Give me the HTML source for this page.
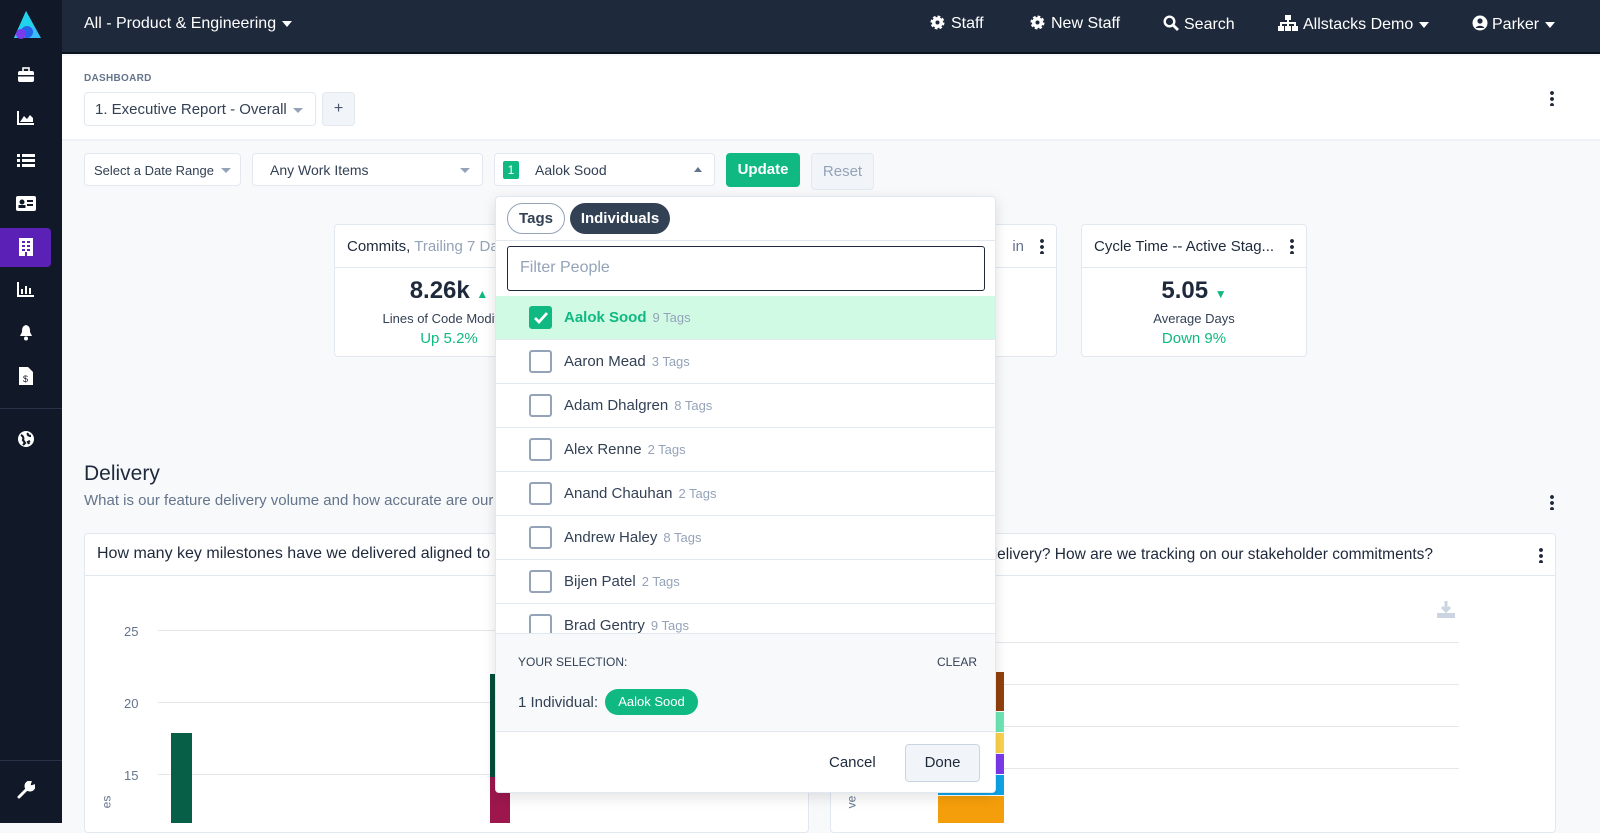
<!DOCTYPE html>
<html><head><meta charset="utf-8"><style>
*{box-sizing:border-box;margin:0;padding:0}
body{width:1600px;height:823px;overflow:hidden;font-family:"Liberation Sans",sans-serif;background:#f8f9fb;position:relative;color:#1e293b}
.abs{position:absolute}
.top{left:0;top:0;width:1600px;height:54px;background:#1e293b;border-bottom:2px solid #0b1220}
.side{left:0;top:0;width:62px;height:823px;background:#111827}
.topt{color:#fff;font-size:16px;top:15px}
.caret{display:inline-block;width:0;height:0;border-left:5px solid transparent;border-right:5px solid transparent;border-top:6px solid #fff;vertical-align:middle;margin-left:6px}
.sel{background:#fff;border:1px solid #e2e8f0;border-radius:4px;font-size:14px;color:#334155}
.gc{display:inline-block;width:0;height:0;border-left:5px solid transparent;border-right:5px solid transparent;border-top:5px solid #94a3b8}
.card{background:#fff;border:1px solid #e2e8f0;border-radius:4px}
.kebab{width:4px;height:16px;background:radial-gradient(circle,#1e293b 1.8px,transparent 2px) 0 0/4px 6px repeat-y}
.row{position:absolute;left:0;width:500px;height:44px;border-bottom:1px solid #e2e8f0;font-size:15px;color:#334155}
.cb{position:absolute;left:33px;top:10px;width:23px;height:23px;border:2px solid #94a3b8;border-radius:3px;background:#fff}
.row span.n{position:absolute;left:68px;top:13px}
.row span.t{color:#94a3b8;font-size:13px;margin-left:6px}
.ic{fill:#fff}
</style></head><body>
<div class="abs top"></div>
<div class="abs side"></div>
<svg class="abs" style="left:10px;top:10px" width="32" height="30"><polygon points="16,1 31,28 4,28" fill="#38bdf8"/><polygon points="16,1 24,16 10,26 4,28" fill="#22d3ee"/><circle cx="17" cy="22" r="6" fill="#2563eb"/><circle cx="11" cy="24" r="5" fill="#7c3aed"/></svg>
<div class="abs" style="left:0;top:228px;width:51px;height:39px;background:#5b21b6;border-radius:0 4px 4px 0"></div>
<svg class="abs" style="left:17px;top:67px" width="18" height="16"><rect x="1" y="4" width="16" height="11" rx="2" class="ic"/><rect x="6" y="1" width="6" height="4" fill="none" stroke="#fff" stroke-width="1.6"/><rect x="1" y="8" width="16" height="1.5" fill="#111827"/></svg>
<svg class="abs" style="left:17px;top:110px" width="18" height="15"><path d="M1 1V14H17" stroke="#fff" stroke-width="2" fill="none"/><path d="M3 12L7 6L10 9L13 5L16 8V12Z" class="ic"/></svg>
<svg class="abs" style="left:17px;top:153px" width="18" height="15"><g class="ic"><rect x="0" y="1" width="3" height="3"/><rect x="5" y="1" width="13" height="3"/><rect x="0" y="6" width="3" height="3"/><rect x="5" y="6" width="13" height="3"/><rect x="0" y="11" width="3" height="3"/><rect x="5" y="11" width="13" height="3"/></g></svg>
<svg class="abs" style="left:16px;top:196px" width="20" height="15"><rect x="0" y="0" width="20" height="15" rx="2" class="ic"/><circle cx="6" cy="6" r="2.5" fill="#111827"/><rect x="2.5" y="9" width="7" height="3" fill="#111827"/><rect x="11" y="4" width="6" height="2" fill="#111827"/><rect x="11" y="8" width="6" height="2" fill="#111827"/></svg>
<svg class="abs" style="left:19px;top:238px" width="14" height="18"><rect width="14" height="18" class="ic"/><g fill="#5b21b6"><rect x="3" y="3" width="3" height="2"/><rect x="8" y="3" width="3" height="2"/><rect x="3" y="7" width="3" height="2"/><rect x="8" y="7" width="3" height="2"/><rect x="3" y="11" width="3" height="2"/><rect x="8" y="11" width="3" height="2"/><rect x="6" y="14" width="2" height="4"/></g></svg>
<svg class="abs" style="left:17px;top:282px" width="18" height="15"><path d="M1 0V14H17" stroke="#fff" stroke-width="2" fill="none"/><g class="ic"><rect x="4" y="7" width="2" height="5"/><rect x="8" y="4" width="2" height="8"/><rect x="12" y="6" width="2" height="6"/></g></svg>
<svg class="abs" style="left:18px;top:324px" width="16" height="17"><path d="M8 1C4 2 4 5 4 8L2 12H14L12 8C12 5 12 2 8 1Z" class="ic"/><circle cx="8" cy="14.5" r="2" class="ic"/></svg>
<svg class="abs" style="left:19px;top:367px" width="14" height="18"><path d="M0 0H9L14 5V18H0Z" class="ic"/><text x="4" y="15" font-size="9" fill="#111827" font-family="Liberation Sans">$</text></svg>
<div class="abs" style="left:0;top:408px;width:62px;height:1px;background:#283347"></div>
<svg class="abs" style="left:17px;top:430px" width="18" height="18"><circle cx="9" cy="9" r="8" class="ic"/><path d="M4 5C6 6 7 8 6 10L8 13L6 15M11 3C10 5 12 6 14 6M13 11L11 12L12 14" stroke="#111827" stroke-width="2.2" fill="none"/></svg>
<div class="abs" style="left:0;top:760px;width:62px;height:1px;background:#283347"></div>
<svg class="abs" style="left:17px;top:781px" width="18" height="18"><path d="M2 16L10 8M13 1A4 4 0 1 0 17 5L14 6L12 4Z" stroke="#fff" stroke-width="3" fill="#fff" stroke-linecap="round"/></svg>
<div class="abs topt" style="left:84px">All - Product &amp; Engineering<span class="caret"></span></div>
<div class="abs topt" style="left:930px"><svg width="15" height="15" style="vertical-align:-2px;margin-right:6px"><circle cx="7.5" cy="7.5" r="5.5" fill="#fff" stroke="#fff" stroke-width="3" stroke-dasharray="2.5 1.8"/><circle cx="7.5" cy="7.5" r="2" fill="#1e293b"/></svg>Staff</div>
<div class="abs topt" style="left:1030px"><svg width="15" height="15" style="vertical-align:-2px;margin-right:6px"><circle cx="7.5" cy="7.5" r="5.5" fill="#fff" stroke="#fff" stroke-width="3" stroke-dasharray="2.5 1.8"/><circle cx="7.5" cy="7.5" r="2" fill="#1e293b"/></svg>New Staff</div>
<div class="abs topt" style="left:1163px"><svg width="16" height="16" style="vertical-align:-2px;margin-right:5px"><circle cx="6.5" cy="6.5" r="4.8" fill="none" stroke="#fff" stroke-width="2.4"/><path d="M10 10L15 15" stroke="#fff" stroke-width="2.8"/></svg>Search</div>
<div class="abs topt" style="left:1278px"><svg width="20" height="16" style="vertical-align:-2px;margin-right:5px"><g fill="#fff"><rect x="7" y="0" width="6" height="5"/><rect x="0" y="11" width="6" height="5"/><rect x="7" y="11" width="6" height="5"/><rect x="14" y="11" width="6" height="5"/><rect x="9" y="5" width="2" height="6"/><rect x="2" y="7" width="16" height="2"/><rect x="2" y="7" width="2" height="4"/><rect x="16" y="7" width="2" height="4"/></g></svg>Allstacks Demo<span class="caret"></span></div>
<div class="abs topt" style="left:1472px"><svg width="16" height="16" style="vertical-align:-2px;margin-right:4px"><circle cx="8" cy="8" r="7.5" fill="#fff"/><circle cx="8" cy="6" r="2.6" fill="#1e293b"/><path d="M3.5 13C5 10 11 10 12.5 13" fill="#1e293b"/></svg>Parker<span class="caret"></span></div>
<div class="abs" style="left:62px;top:56px;width:1538px;height:85px;background:#fff;border-bottom:2px solid #eef1f5"></div>
<div class="abs" style="left:84px;top:73px;font-size:10px;font-weight:bold;color:#64748b;letter-spacing:.3px">DASHBOARD</div>
<div class="abs sel" style="left:84px;top:92px;width:232px;height:34px;padding:8px 10px;font-size:15px">1. Executive Report - Overall<span class="gc abs" style="right:12px;top:15px"></span></div>
<div class="abs" style="left:322px;top:92px;width:33px;height:34px;background:#f1f5f9;border:1px solid #e2e8f0;border-radius:4px;text-align:center;line-height:32px;color:#475569;font-size:16px">+</div>
<div class="abs kebab" style="left:1550px;top:90px"></div>
<div class="abs sel" style="left:84px;top:153px;width:157px;height:33px;padding:9px 9px;font-size:13px">Select a Date Range<span class="gc abs" style="right:9px;top:14px"></span></div>
<div class="abs sel" style="left:252px;top:153px;width:231px;height:33px;padding:8px 17px">Any Work Items<span class="gc abs" style="right:12px;top:14px"></span></div>
<div class="abs sel" style="left:494px;top:153px;width:221px;height:33px;padding:8px 0 0 40px">Aalok Sood<span class="abs" style="left:8px;top:7px;width:16px;height:18px;background:#10b981;color:#fff;font-size:12px;text-align:center;line-height:18px;border-radius:2px">1</span><span class="abs" style="right:12px;top:13px;width:0;height:0;border-left:4px solid transparent;border-right:4px solid transparent;border-bottom:5px solid #64748b"></span></div>
<div class="abs" style="left:726px;top:153px;width:74px;height:34px;background:#10b981;border-radius:4px;color:#fff;font-weight:bold;font-size:15px;text-align:center;line-height:34px">Update</div>
<div class="abs" style="left:811px;top:153px;width:63px;height:37px;background:#f1f5f9;border:1px solid #e2e8f0;border-radius:4px;color:#94a3b8;font-size:15px;text-align:center;line-height:36px">Reset</div>
<div class="abs card" style="left:334px;top:224px;width:230px;height:133px"><div style="height:43px;border-bottom:1px solid #e2e8f0;padding:13px 12px;font-size:15px;white-space:nowrap;overflow:hidden">Commits, <span style="color:#94a3b8">Trailing 7 Days</span></div><div style="text-align:center;padding-top:9px"><div style="font-size:24px;font-weight:bold">8.26k <span style="font-size:12px;color:#10b981">▲</span></div><div style="font-size:13px;color:#334155;margin-top:6px;white-space:nowrap">Lines of Code Modified</div><div style="font-size:15px;color:#10b981;margin-top:4px">Up 5.2%</div></div></div>
<div class="abs card" style="left:830px;top:224px;width:227px;height:133px"><div style="height:43px;border-bottom:1px solid #e2e8f0;padding:13px 12px;font-size:15px;text-align:right;padding-right:32px;color:#64748b">in</div><div class="abs kebab" style="right:12px;top:13px"></div></div>
<div class="abs card" style="left:1081px;top:224px;width:226px;height:133px"><div style="height:43px;border-bottom:1px solid #e2e8f0;padding:13px 12px;font-size:15px;white-space:nowrap">Cycle Time -- Active Stag...</div><div class="abs kebab" style="right:12px;top:13px"></div><div style="text-align:center;padding-top:9px"><div style="font-size:24px;font-weight:bold">5.05 <span style="font-size:12px;color:#10b981">▼</span></div><div style="font-size:13px;color:#334155;margin-top:6px">Average Days</div><div style="font-size:15px;color:#10b981;margin-top:4px">Down 9%</div></div></div>
<div class="abs" style="left:84px;top:462px;font-size:21px;color:#1e293b">Delivery</div>
<div class="abs" style="left:84px;top:492px;font-size:15px;color:#64748b">What is our feature delivery volume and how accurate are our estimates?</div>
<div class="abs kebab" style="left:1550px;top:494px"></div>
<div class="abs card" style="left:84px;top:533px;width:725px;height:300px"><div style="height:42px;border-bottom:1px solid #e2e8f0;padding:11px 12px;font-size:16px;white-space:nowrap">How many key milestones have we delivered aligned to 2021 goals?</div></div>
<div class="abs card" style="left:830px;top:533px;width:726px;height:300px;overflow:hidden"><div style="height:42px;border-bottom:1px solid #e2e8f0"></div><div class="abs" style="right:122px;top:12px;font-size:15.5px;white-space:nowrap">delivery? How are we tracking on our stakeholder commitments?</div><div class="abs kebab" style="right:12px;top:13px"></div></div>
<div class="abs" style="left:124px;top:624px;font-size:13px;color:#64748b">25</div>
<div class="abs" style="left:124px;top:696px;font-size:13px;color:#64748b">20</div>
<div class="abs" style="left:124px;top:768px;font-size:13px;color:#64748b">15</div>
<div class="abs" style="left:158px;top:630px;width:650px;height:1px;background:#e5e7eb"></div>
<div class="abs" style="left:158px;top:702px;width:650px;height:1px;background:#e5e7eb"></div>
<div class="abs" style="left:158px;top:774px;width:650px;height:1px;background:#e5e7eb"></div>
<div class="abs" style="left:171px;top:733px;width:21px;height:90px;background:#065f46"></div>
<div class="abs" style="left:490px;top:674px;width:20px;height:103px;background:#064e3b"></div>
<div class="abs" style="left:490px;top:777px;width:20px;height:46px;background:#9d174d"></div>
<div class="abs" style="left:100px;top:795px;font-size:12px;color:#64748b;transform:rotate(-90deg)">es</div>
<svg class="abs" style="left:1436px;top:600px" width="20" height="20"><path d="M10 1V11M6 7L10 11L14 7" stroke="#cbd5e1" stroke-width="3" fill="none"/><rect x="1" y="13" width="18" height="5" fill="#cbd5e1"/></svg>
<div class="abs" style="left:960px;top:642px;width:499px;height:1px;background:#e5e7eb"></div>
<div class="abs" style="left:960px;top:684px;width:499px;height:1px;background:#e5e7eb"></div>
<div class="abs" style="left:960px;top:726px;width:499px;height:1px;background:#e5e7eb"></div>
<div class="abs" style="left:960px;top:768px;width:499px;height:1px;background:#e5e7eb"></div>
<div class="abs" style="left:938px;top:672px;width:66px;height:39px;background:#92400e"></div>
<div class="abs" style="left:938px;top:712px;width:66px;height:20px;background:#6ee7b7"></div>
<div class="abs" style="left:938px;top:733px;width:66px;height:20px;background:#fcd34d"></div>
<div class="abs" style="left:938px;top:754px;width:66px;height:20px;background:#7c3aed"></div>
<div class="abs" style="left:938px;top:775px;width:66px;height:20px;background:#0ea5e9"></div>
<div class="abs" style="left:938px;top:796px;width:66px;height:27px;background:#f59e0b"></div>
<div class="abs" style="left:845px;top:795px;font-size:12px;color:#64748b;transform:rotate(-90deg)">ve</div>
<div class="abs" style="left:495px;top:196px;width:501px;height:597px;background:#fff;border:1px solid #e2e8f0;border-radius:4px;box-shadow:0 4px 14px rgba(0,0,0,.12);overflow:hidden">
 <div class="abs" style="left:11px;top:6px;width:58px;height:31px;border:1px solid #94a3b8;border-radius:16px;text-align:center;line-height:29px;font-weight:bold;font-size:15px;color:#334155">Tags</div>
 <div class="abs" style="left:74px;top:6px;width:100px;height:31px;background:#334155;border-radius:16px;text-align:center;line-height:31px;font-weight:bold;font-size:15px;color:#fff">Individuals</div>
 <div class="abs" style="left:0;top:43px;width:501px;height:1px;background:#e2e8f0"></div>
 <div class="abs" style="left:11px;top:49px;width:478px;height:45px;border:1px solid #1e293b;border-radius:3px;padding:12px;font-size:16px;color:#94a3b8">Filter People</div>
 <div class="row" style="top:99px;background:#d1fae5"><div class="cb" style="background:#10b981;border-color:#10b981"><svg width="19" height="19" style="position:absolute;left:0;top:0"><path d="M4 10L8 14L16 5" stroke="#fff" stroke-width="2.8" fill="none"/></svg></div><span class="n" style="color:#10b981;font-weight:bold">Aalok Sood<span class="t" style="font-weight:normal">9 Tags</span></span></div>
 <div class="row" style="top:143px"><div class="cb"></div><span class="n">Aaron Mead<span class="t">3 Tags</span></span></div>
 <div class="row" style="top:187px"><div class="cb"></div><span class="n">Adam Dhalgren<span class="t">8 Tags</span></span></div>
 <div class="row" style="top:231px"><div class="cb"></div><span class="n">Alex Renne<span class="t">2 Tags</span></span></div>
 <div class="row" style="top:275px"><div class="cb"></div><span class="n">Anand Chauhan<span class="t">2 Tags</span></span></div>
 <div class="row" style="top:319px"><div class="cb"></div><span class="n">Andrew Haley<span class="t">8 Tags</span></span></div>
 <div class="row" style="top:363px"><div class="cb"></div><span class="n">Bijen Patel<span class="t">2 Tags</span></span></div>
 <div class="row" style="top:407px"><div class="cb"></div><span class="n">Brad Gentry<span class="t">9 Tags</span></span></div>
 <div class="abs" style="left:0;top:436px;width:501px;height:99px;background:#f8f9fb;border-top:1px solid #e2e8f0;border-bottom:1px solid #e2e8f0"></div>
 <div class="abs" style="left:22px;top:458px;font-size:12px;color:#334155">YOUR SELECTION:</div>
 <div class="abs" style="left:441px;top:458px;font-size:12px;color:#334155">CLEAR</div>
 <div class="abs" style="left:22px;top:497px;font-size:15px;color:#334155">1 Individual:</div>
 <div class="abs" style="left:109px;top:492px;width:93px;height:26px;background:#10b981;border-radius:13px;color:#fff;font-size:13px;text-align:center;line-height:26px">Aalok Sood</div>
 <div class="abs" style="left:333px;top:557px;font-size:15px;color:#1e293b">Cancel</div>
 <div class="abs" style="left:409px;top:547px;width:75px;height:38px;background:#f1f5f9;border:1px solid #cbd5e1;border-radius:4px;text-align:center;line-height:36px;font-size:15px;color:#1e293b">Done</div>
</div>
</body></html>
